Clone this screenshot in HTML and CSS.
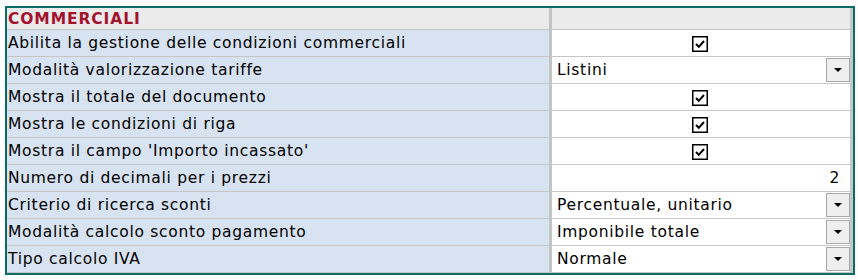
FILE: index.html
```html
<!DOCTYPE html>
<html lang="it">
<head>
    <meta charset="UTF-8">
    <title>Commerciali</title>
    <link rel="stylesheet" href="styles.css">
</head>
<body>
    <div class="panel">
        <table class="grid">
            <tr class="section">
                <td class="label">COMMERCIALI</td>
                <td class="value"></td>
            </tr>
            <tr>
                <td class="label">Abilita la gestione delle condizioni commerciali</td>
                <td class="value center"><span class="check"><svg width="16" height="16" viewBox="0 0 16 16"><rect x="0.75" y="0.75" width="14.5" height="14.5" fill="#fff" stroke="#000" stroke-width="1.5"/><path d="M4 8 L6.8 10.8 L12 5" fill="none" stroke="#000" stroke-width="2"/></svg></span></td>
            </tr>
            <tr>
                <td class="label">Modalità valorizzazione tariffe</td>
                <td class="value"><div class="combo"><span class="combo-text">Listini</span><span class="drop-btn"></span></div></td>
            </tr>
            <tr>
                <td class="label">Mostra il totale del documento</td>
                <td class="value center"><span class="check"><svg width="16" height="16" viewBox="0 0 16 16"><rect x="0.75" y="0.75" width="14.5" height="14.5" fill="#fff" stroke="#000" stroke-width="1.5"/><path d="M4 8 L6.8 10.8 L12 5" fill="none" stroke="#000" stroke-width="2"/></svg></span></td>
            </tr>
            <tr>
                <td class="label">Mostra le condizioni di riga</td>
                <td class="value center"><span class="check"><svg width="16" height="16" viewBox="0 0 16 16"><rect x="0.75" y="0.75" width="14.5" height="14.5" fill="#fff" stroke="#000" stroke-width="1.5"/><path d="M4 8 L6.8 10.8 L12 5" fill="none" stroke="#000" stroke-width="2"/></svg></span></td>
            </tr>
            <tr>
                <td class="label">Mostra il campo 'Importo incassato'</td>
                <td class="value center"><span class="check"><svg width="16" height="16" viewBox="0 0 16 16"><rect x="0.75" y="0.75" width="14.5" height="14.5" fill="#fff" stroke="#000" stroke-width="1.5"/><path d="M4 8 L6.8 10.8 L12 5" fill="none" stroke="#000" stroke-width="2"/></svg></span></td>
            </tr>
            <tr>
                <td class="label">Numero di decimali per i prezzi</td>
                <td class="value number">2</td>
            </tr>
            <tr>
                <td class="label">Criterio di ricerca sconti</td>
                <td class="value"><div class="combo"><span class="combo-text">Percentuale, unitario</span><span class="drop-btn"></span></div></td>
            </tr>
            <tr>
                <td class="label">Modalità calcolo sconto pagamento</td>
                <td class="value"><div class="combo"><span class="combo-text">Imponibile totale</span><span class="drop-btn"></span></div></td>
            </tr>
            <tr>
                <td class="label">Tipo calcolo IVA</td>
                <td class="value"><div class="combo"><span class="combo-text">Normale</span><span class="drop-btn"></span></div></td>
            </tr>
        </table>
    </div>
</body>
</html>
```

FILE: styles.css
```css
body {
    margin: 0;
    padding: 6px 0 0 5px;
    background: #fff;
    font-family: "DejaVu Sans", sans-serif;
    font-size: 15.5px;
    letter-spacing: 0.7px;
    color: #000;
}
.panel {
    width: 846px;
    border: 2px solid #0b6b66;
}
.grid {
    width: 100%;
    border-collapse: collapse;
    table-layout: fixed;
}
.grid td {
    height: 26px;
    padding: 0;
    border-bottom: 1px solid #c6c6c6;
    white-space: nowrap;
    overflow: hidden;
}
.label {
    width: 541px;
    padding-left: 1px !important;
    background: #d8e3f1;
    border-right: 3px solid #c4c4c4;
}
.value {
    background: #fff;
    border-right: 3px solid #c8c8c8;
    padding-left: 5px !important;
}
.section td {
    height: 21px;
    background: #ebebeb;
}
.section .label {
    color: #a3122e;
    font-weight: bold;
    letter-spacing: 0.9px;
}
.center {
    text-align: center;
}
.check svg {
    display: inline-block;
    vertical-align: middle;
    margin-left: -7px;
}
.number {
    text-align: right;
    padding-right: 10px !important;
}
.combo {
    display: flex;
    align-items: center;
    height: 26px;
}
.combo-text {
    flex: 1;
}
.drop-btn {
    width: 22px;
    height: 22px;
    border: 1px solid #a8a8a8;
    background: #efefef;
    display: flex;
    align-items: center;
    justify-content: center;
}
.drop-btn::after {
    content: "";
    border-left: 4px solid transparent;
    border-right: 4px solid transparent;
    border-top: 4px solid #000;
}
```
